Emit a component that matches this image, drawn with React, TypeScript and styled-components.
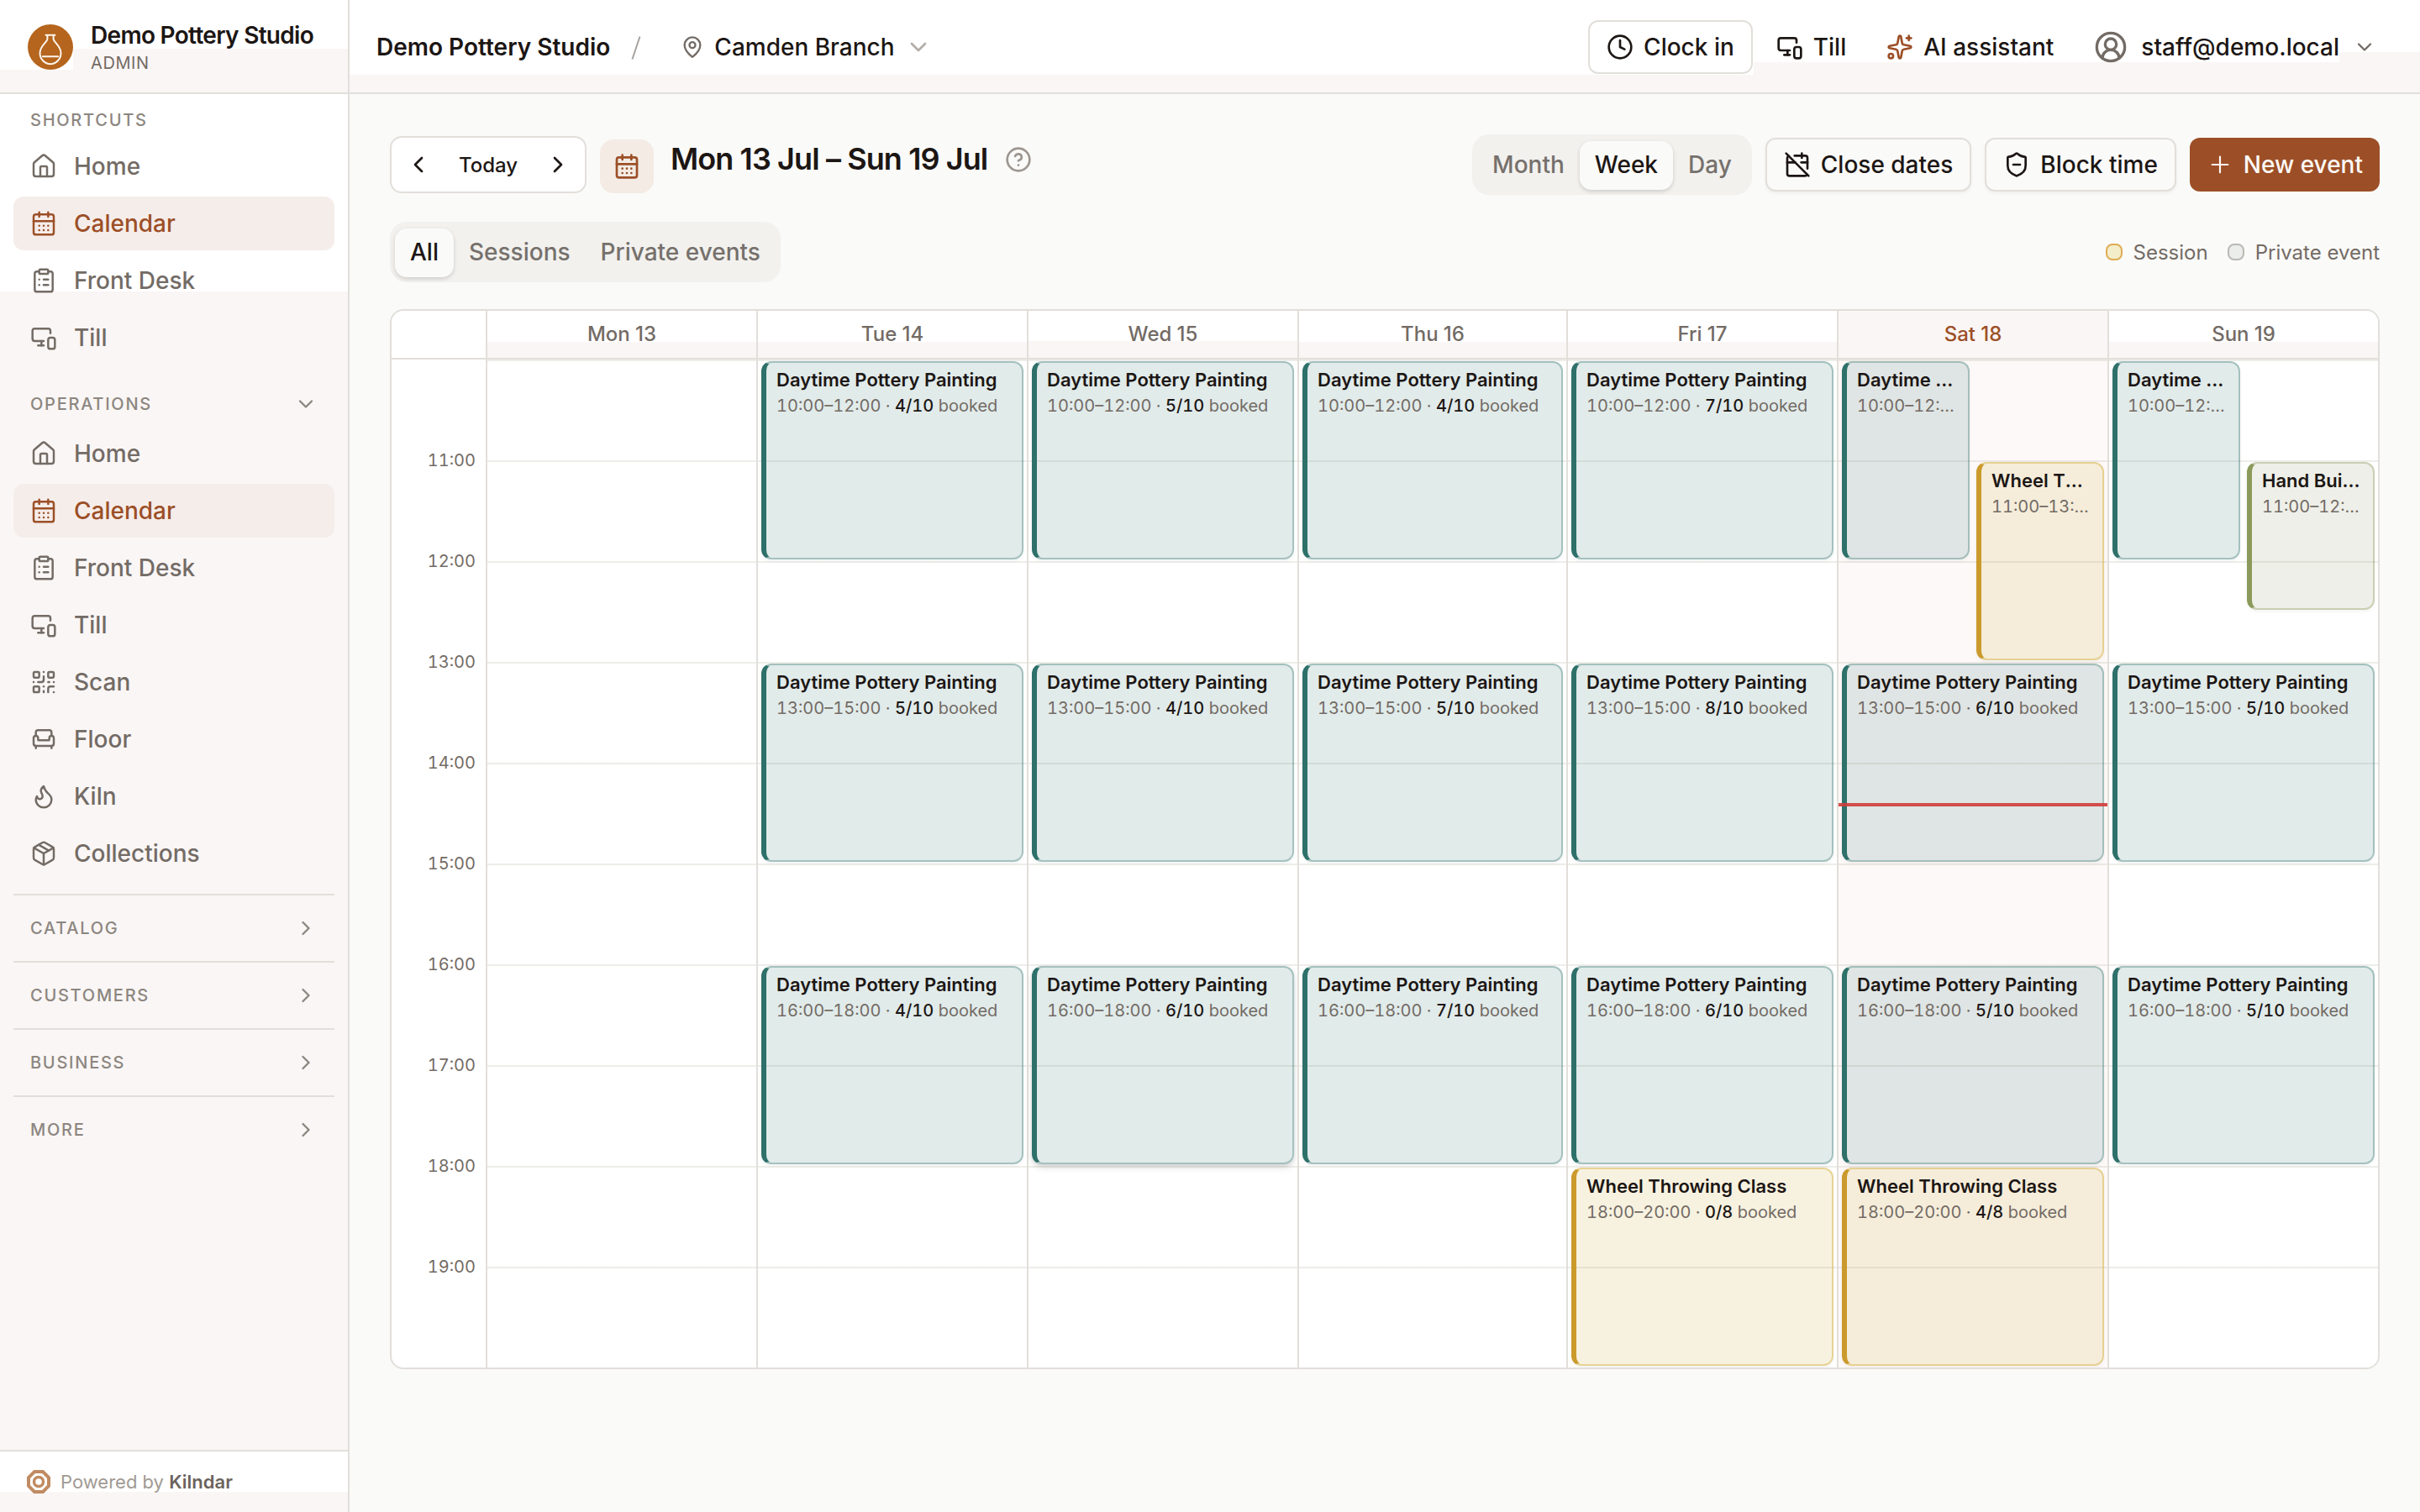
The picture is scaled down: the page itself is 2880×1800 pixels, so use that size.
import React from 'react';
import styled, { createGlobalStyle, css } from 'styled-components';
import {
  Armchair, CalendarDays, CalendarOff, ChevronDown, ChevronLeft, ChevronRight, CircleQuestionMark,
  CircleUserRound, ClipboardList, Clock, Flame, House, MapPin, MonitorSmartphone, Package, Plus,
  QrCode, ShieldMinus, Sparkles,
} from 'lucide-react';

const color = {
  ink: '#1c1614',
  muted: '#736b65',
  faint: '#8c8680',
  line: '#e2dfda',
  hourLine: 'rgba(90, 90, 60, 0.11)',
  accent: '#9c4f27',
  tint: '#faf6f5',
  canvas: '#fafaf8',
};

const GlobalStyle = createGlobalStyle`
  * { box-sizing: border-box; }
  body {
    margin: 0;
    background: ${color.canvas};
    color: ${color.ink};
    font-family: Inter, "Liberation Sans", sans-serif;
    font-size: 28px;
  }
  button { font: inherit; color: inherit; margin: 0; cursor: pointer; }
  svg { display: block; flex: none; }
`;

const Shell = styled.div`
  display: grid;
  grid-template-columns: 416px 1fr;
  width: 2880px;
  height: 1800px;
  overflow: hidden;
`;

/* Sidebar */

const Sidebar = styled.aside`
  display: flex;
  flex-direction: column;
  height: 1800px;
  border-right: 2px solid ${color.line};
`;

const Brand = styled.div`
  display: flex;
  align-items: center;
  gap: 20px;
  height: 112px;
  padding: 2px 32px 0;
  border-bottom: 2px solid ${color.line};
  background:
    linear-gradient(#fff 83px, ${color.tint} 83px) left / 87px 100% no-repeat,
    linear-gradient(#fff 58px, ${color.tint} 58px) right / 327px 100% no-repeat;
`;

const BrandText = styled.div`
  display: flex;
  flex-direction: column;
  padding-top: 2px;
`;

const BrandName = styled.div`
  font-weight: 600;
  line-height: 36px;
  letter-spacing: -0.025em;
  white-space: nowrap;
`;

const BrandRole = styled.div`
  font-size: 20px;
  line-height: 30px;
  letter-spacing: 0.03em;
  color: ${color.muted};
`;

const Nav = styled.nav`
  flex: 1;
  padding: 16px 16px 0;
  background: linear-gradient(#fff 235px, ${color.tint} 235px);
`;

const NavGroup = styled.section`
  display: flex;
  flex-direction: column;
  gap: 4px;
  & + & { margin-top: 32px; }
`;

const GroupHeading = styled.div<{ $roomy?: boolean }>`
  display: flex;
  align-items: center;
  justify-content: space-between;
  height: 30px;
  margin-bottom: ${(p) => (p.$roomy ? 8 : 4)}px;
  padding: 0 20px;
  font-size: 20px;
  font-weight: 500;
  letter-spacing: 0.087em;
  color: ${color.faint};
`;

const NavItem = styled.a<{ $active?: boolean }>`
  display: flex;
  align-items: center;
  gap: 20px;
  height: 64px;
  padding: 0 20px;
  border-radius: 12px;
  font-weight: 500;
  color: ${(p) => (p.$active ? color.accent : color.muted)};
  background: ${(p) => (p.$active ? '#f5edea' : 'transparent')};
`;

const ClosedGroups = styled.div`
  margin-top: 16px;
`;

const ClosedGroup = styled(GroupHeading)`
  height: 80px;
  margin: 0;
  border-top: 2px solid ${color.line};
`;

const PoweredBy = styled.footer`
  display: flex;
  align-items: center;
  gap: 12px;
  height: 74px;
  padding: 0 32px;
  border-top: 2px solid ${color.line};
  background: linear-gradient(#fff 48px, ${color.tint} 48px);
  font-size: 22px;
  color: #a19a93;
  b { font-weight: 600; color: #6b635d; }
`;

/* Top bar */

const Page = styled.div`
  display: flex;
  flex-direction: column;
  min-width: 0;
`;

const TopBar = styled.header`
  display: flex;
  align-items: center;
  justify-content: space-between;
  height: 112px;
  padding: 2px 32px 0;
  border-bottom: 2px solid ${color.line};
  font-weight: 500;
  background:
    linear-gradient(#fff 62px, ${color.tint} 62px) right / 96px 100% no-repeat,
    linear-gradient(#fff 74px, ${color.tint} 74px) right / 793px 100% no-repeat,
    linear-gradient(#fff 89px, ${color.tint} 89px);
`;

const Crumbs = styled.div`
  display: flex;
  align-items: center;
`;

const Org = styled.span`
  font-weight: 600;
`;

const Slash = styled.svg`
  margin: 2px 47px 0 25px;
`;

const Branch = styled.span`
  display: flex;
  align-items: center;
  gap: 12px;
`;

const BarActions = styled.div`
  display: flex;
  align-items: center;
  gap: 8px;
`;

const BarButton = styled.button<{ $outlined?: boolean; $wide?: boolean }>`
  display: flex;
  align-items: center;
  gap: ${(p) => (p.$wide ? 16 : 12)}px;
  height: 64px;
  padding: 0 20px;
  border: 0;
  border-radius: 12px;
  background: transparent;
  font-weight: 500;
  ${(p) => p.$outlined && css`
    border: 2px solid ${color.line};
    background: #fff;
  `}
`;

/* Toolbar */

const Main = styled.main`
  display: flex;
  flex-direction: column;
  gap: 32px;
  padding: 48px;
`;

const Row = styled.div`
  display: flex;
  align-items: center;
  justify-content: space-between;
  height: 72px;
`;

const Cluster = styled.div`
  display: flex;
  align-items: center;
  gap: 16px;
`;

const DateStepper = styled.div`
  display: grid;
  grid-template-columns: 64px 102px 64px;
  height: 68px;
  border: 2px solid ${color.line};
  border-radius: 14px;
  background: #fff;
`;

const StepButton = styled.button`
  display: flex;
  align-items: center;
  justify-content: center;
  padding: 0;
  border: 0;
  background: transparent;
  font-size: 24px;
  font-weight: 500;
`;

const RangeHeading = styled.div`
  display: flex;
  align-items: center;
`;

const RangeIcon = styled.div`
  display: grid;
  place-items: center;
  width: 64px;
  height: 64px;
  margin: 4px 20px 0 0;
  border-radius: 16px;
  background: #f3ebe4;
  color: ${color.accent};
`;

const RangeTitle = styled.h1`
  margin: 0 21px 14px 0;
  font-size: 36px;
  line-height: 40px;
  font-weight: 600;
  letter-spacing: -0.025em;
  white-space: nowrap;
`;

const HelpIcon = styled(CircleQuestionMark)`
  margin-bottom: 12px;
  color: #9d9690;
`;

const Segments = styled.div`
  display: flex;
  align-items: flex-end;
  height: 72px;
  padding: 6px;
  border-radius: 20px;
  background: #f2f1ee;
`;

const Segment = styled.button<{ $active?: boolean }>`
  height: 58px;
  padding: 0 18px 2px;
  border: 0;
  border-radius: 14px;
  font-weight: 500;
  background: transparent;
  color: #76706c;
  ${(p) => p.$active && css`
    background: ${color.canvas};
    color: ${color.ink};
    box-shadow: 0 2px 4px rgba(0, 0, 0, 0.1), 0 2px 6px rgba(0, 0, 0, 0.06);
  `}
`;

const ActionButton = styled.button<{ $primary?: boolean }>`
  display: flex;
  align-items: center;
  gap: 12px;
  height: 64px;
  padding: 0 20px;
  border-radius: 12px;
  font-weight: 500;
  border: ${(p) => (p.$primary ? '0' : `2px solid ${color.line}`)};
  color: ${(p) => (p.$primary ? '#fdf9f6' : color.ink)};
  background: ${(p) => (p.$primary ? color.accent : color.canvas)};
  box-shadow: ${(p) => (p.$primary ? 'none' : '0 2px 4px rgba(0, 0, 0, 0.05)')};
`;

const Legend = styled.div`
  display: flex;
  gap: 23px;
  font-size: 24px;
  color: ${color.muted};
`;

const LegendItem = styled.span`
  display: flex;
  align-items: center;
  gap: 13px;
`;

const Swatch = styled.i<{ $fill: string; $edge: string }>`
  width: 20px;
  height: 20px;
  border-radius: 8px;
  border: 2px solid ${(p) => p.$edge};
  background: ${(p) => p.$fill};
`;

/* Calendar */

const weekColumns = '112px 322px 322px 322px 320px 322px 322px 322px';

const Calendar = styled.section`
  width: 2368px;
  height: 1262px;
  border: 2px solid ${color.line};
  border-radius: 16px;
  background: #fff;
  overflow: hidden;
`;

const DayNames = styled.div`
  display: grid;
  grid-template-columns: ${weekColumns};
  height: 58px;
  border-bottom: 2px solid ${color.line};
`;

const DayName = styled.div<{ $today?: boolean; $split: number }>`
  display: flex;
  align-items: center;
  justify-content: center;
  gap: 0.26em;
  padding-bottom: 2px;
  border-left: 2px solid ${color.line};
  font-size: 24px;
  font-weight: 450;
  color: ${(p) => (p.$today ? color.accent : color.muted)};
  background: linear-gradient(#fff ${(p) => p.$split}px, ${color.tint} ${(p) => p.$split}px);
  b { font-weight: 500; }
`;

const WeekBody = styled.div`
  display: grid;
  grid-template-columns: ${weekColumns};
  height: 1200px;
`;

const Hours = styled.div`
  display: flex;
  flex-direction: column;
  padding: 105px 12px 0 0;
  font-size: 20px;
  line-height: 30px;
  color: ${color.muted};
  text-align: right;
`;

const HourLabel = styled.div`
  height: 120px;
  font-variant-numeric: tabular-nums;
`;

const DayColumn = styled.div<{ $today?: boolean }>`
  position: relative;
  border-left: 2px solid ${color.line};
  background:
    repeating-linear-gradient(${color.hourLine} 0 2px, transparent 2px 120px),
    ${(p) => (p.$today ? '#fdf9f8' : '#fff')};
`;

type Tone = 'teal' | 'gold' | 'olive';

const tones: Record<Tone, { bar: string; edge: string; fill: string }> = {
  teal: { bar: '#2e706a', edge: 'rgba(46, 112, 106, 0.43)', fill: 'rgba(46, 112, 106, 0.14)' },
  gold: { bar: '#cb9a2c', edge: 'rgba(208, 168, 44, 0.5)', fill: 'rgba(198, 166, 50, 0.15)' },
  olive: { bar: '#8b9a5b', edge: 'rgba(139, 148, 91, 0.46)', fill: 'rgba(128, 132, 80, 0.135)' },
};

const EventCard = styled.article<{ $tone: Tone; $lane?: 'left' | 'right'; $raised?: boolean }>`
  position: absolute;
  left: ${(p) => (p.$lane === 'right' ? 'calc(50% + 4px)' : '4px')};
  right: ${(p) => (p.$lane === 'left' ? 'calc(50% + 4px)' : '4px')};
  padding: 6px 12px;
  overflow: hidden;
  border: 2px solid ${(p) => tones[p.$tone].edge};
  border-left: 6px solid ${(p) => tones[p.$tone].bar};
  border-radius: 12px;
  background: ${(p) => tones[p.$tone].fill};
  background-clip: padding-box;
  box-shadow: ${(p) => (p.$raised
    ? '0 4px 8px rgba(0, 0, 0, 0.12), 0 2px 4px rgba(0, 0, 0, 0.08)'
    : '0 2px 4px rgba(0, 0, 0, 0.05)')};
`;

const EventTitle = styled.div`
  font-size: 22px;
  line-height: 28px;
  font-weight: 600;
  white-space: nowrap;
  overflow: hidden;
  text-overflow: ellipsis;
`;

const EventMeta = styled.div`
  margin-top: 3px;
  font-size: 20px;
  line-height: 28px;
  color: ${color.muted};
  white-space: nowrap;
  overflow: hidden;
  text-overflow: ellipsis;
  font-variant-numeric: tabular-nums;
  b { font-weight: 500; color: ${color.ink}; }
`;

const NowLine = styled.div`
  position: absolute;
  left: 0;
  right: 0;
  height: 4px;
  background: rgba(208, 60, 58, 0.9);
`;

interface Booking {
  title: string;
  start: number;
  end: number;
  booked: string;
  tone: Tone;
  lane?: 'left' | 'right';
  raised?: boolean;
}

const painting = (start: number, booked: number, extra: Partial<Booking> = {}): Booking => ({
  title: 'Daytime Pottery Painting', start, end: start + 2, booked: `${booked}/10`, tone: 'teal', ...extra,
});

const wheel = (start: number, booked: number, lane?: 'right'): Booking => ({
  title: 'Wheel Throwing Class', start, end: start + 2, booked: `${booked}/8`, tone: 'gold', lane,
});

interface Day { name: string; date: number; split: number; today?: boolean; events: Booking[] }

const week: Day[] = [
  { name: 'Mon', date: 13, split: 37, events: [] },
  { name: 'Tue', date: 14, split: 37, events: [painting(10, 4), painting(13, 5), painting(16, 4)] },
  { name: 'Wed', date: 15, split: 36, events: [painting(10, 5), painting(13, 4), painting(16, 6, { raised: true })] },
  { name: 'Thu', date: 16, split: 37, events: [painting(10, 4), painting(13, 5), painting(16, 7)] },
  { name: 'Fri', date: 17, split: 37, events: [painting(10, 7), painting(13, 8), painting(16, 6), wheel(18, 0)] },
  {
    name: 'Sat', date: 18, split: 0, today: true,
    events: [painting(10, 5, { lane: 'left' }), wheel(11, 6, 'right'), painting(13, 6), painting(16, 5), wheel(18, 4)],
  },
  {
    name: 'Sun', date: 19, split: 37,
    events: [
      painting(10, 5, { lane: 'left' }),
      { title: 'Hand Building Class', start: 11, end: 12.5, booked: '3/8', tone: 'olive', lane: 'right' },
      painting(13, 5), painting(16, 5),
    ],
  },
];

const HOUR = 120;
const clock = (h: number) => `${Math.floor(h)}:${h % 1 ? '30' : '00'}`;

const shortcuts = [
  { label: 'Home', icon: House },
  { label: 'Calendar', icon: CalendarDays, active: true },
  { label: 'Front Desk', icon: ClipboardList },
  { label: 'Till', icon: MonitorSmartphone },
];

const operations = [
  ...shortcuts,
  { label: 'Scan', icon: QrCode },
  { label: 'Floor', icon: Armchair },
  { label: 'Kiln', icon: Flame },
  { label: 'Collections', icon: Package },
];

const NavLinks = ({ items }: { items: { label: string; icon: React.ElementType; active?: boolean }[] }) => (
  <>
    {items.map(({ label, icon: Icon, active }) => (
      <NavItem key={label} $active={active}>
        <Icon size={32} strokeWidth={1.85} />
        {label}
      </NavItem>
    ))}
  </>
);

const VaseLogo = () => (
  <svg width="56" height="56" viewBox="0 0 56 56" fill="none">
    <circle cx="28" cy="28" r="27" fill="#b5651d" />
    <g stroke="#fdf6ee" strokeWidth="2" strokeLinecap="round" strokeLinejoin="round">
      <path d="M22.5 13.8h11" />
      <path d="M24.4 14v4.2c0 4-8.9 8.2-8.9 17 0 7.500 6.200 13 12.500 13s12.500-5.500 12.500-13c0-8.800-8.900-13-8.900-17V14" />
      <path d="M18.800 39.300h18.400" />
    </g>
  </svg>
);

const KilnMark = () => (
  <svg width="28" height="28" viewBox="0 0 28 28" fill="none" stroke="#c08b62">
    <path d="M9 2h10l7 7v10l-7 7H9l-7-7V9z" strokeWidth="4" />
    <circle cx="14" cy="14" r="5.500" strokeWidth="3.500" />
  </svg>
);

export default function App() {
  return (
    <Shell>
      <GlobalStyle />
      <Sidebar>
        <Brand>
          <VaseLogo />
          <BrandText>
            <BrandName>Demo Pottery Studio</BrandName>
            <BrandRole>ADMIN</BrandRole>
          </BrandText>
        </Brand>
        <Nav>
          <NavGroup>
            <GroupHeading>SHORTCUTS</GroupHeading>
            <NavLinks items={shortcuts} />
          </NavGroup>
          <NavGroup>
            <GroupHeading $roomy>OPERATIONS<ChevronDown size={28} /></GroupHeading>
            <NavLinks items={operations} />
          </NavGroup>
          <ClosedGroups>
            {['CATALOG', 'CUSTOMERS', 'BUSINESS', 'MORE'].map((name) => (
              <ClosedGroup key={name}>{name}<ChevronRight size={28} /></ClosedGroup>
            ))}
          </ClosedGroups>
        </Nav>
        <PoweredBy>
          <KilnMark />
          <span>Powered by <b>Kilndar</b></span>
        </PoweredBy>
      </Sidebar>

      <Page>
        <TopBar>
          <Crumbs>
            <Org>Demo Pottery Studio</Org>
            <Slash width="12" height="30" viewBox="0 0 12 30"><path d="M10.500 1.500 1.500 28.500" stroke="#a8a29e" strokeWidth="2" /></Slash>
            <Branch>
              <MapPin size={28} color={color.muted} />
              Camden Branch
              <ChevronDown size={32} color="#b3ada7" />
            </Branch>
          </Crumbs>
          <BarActions>
            <BarButton $outlined><Clock size={32} />Clock in</BarButton>
            <BarButton><MonitorSmartphone size={32} />Till</BarButton>
            <BarButton><Sparkles size={32} color={color.accent} />AI assistant</BarButton>
            <BarButton $wide>
              <CircleUserRound size={40} color={color.muted} />
              staff@demo.local
              <ChevronDown size={28} color={color.muted} />
            </BarButton>
          </BarActions>
        </TopBar>

        <Main>
          <Row>
            <Cluster>
              <DateStepper>
                <StepButton><ChevronLeft size={32} /></StepButton>
                <StepButton>Today</StepButton>
                <StepButton><ChevronRight size={32} /></StepButton>
              </DateStepper>
              <RangeHeading>
                <RangeIcon><CalendarDays size={32} /></RangeIcon>
                <RangeTitle>Mon 13 Jul – Sun 19 Jul</RangeTitle>
                <HelpIcon size={32} />
              </RangeHeading>
            </Cluster>
            <Cluster>
              <Segments>
                <Segment>Month</Segment>
                <Segment $active>Week</Segment>
                <Segment>Day</Segment>
              </Segments>
              <ActionButton><CalendarOff size={32} />Close dates</ActionButton>
              <ActionButton><ShieldMinus size={32} />Block time</ActionButton>
              <ActionButton $primary><Plus size={32} strokeWidth={1.6} />New event</ActionButton>
            </Cluster>
          </Row>

          <Row>
            <Segments>
              <Segment $active>All</Segment>
              <Segment>Sessions</Segment>
              <Segment>Private events</Segment>
            </Segments>
            <Legend>
              <LegendItem><Swatch $fill="#f3edca" $edge="#dfab55" />Session</LegendItem>
              <LegendItem><Swatch $fill="#ebedea" $edge="#b9b9b4" />Private event</LegendItem>
            </Legend>
          </Row>

          <Calendar>
            <DayNames>
              <div />
              {week.map((d) => (
                <DayName key={d.name} $today={d.today} $split={d.split}>
                  <span>{d.name}</span><b>{d.date}</b>
                </DayName>
              ))}
            </DayNames>
            <WeekBody>
              <Hours>
                {[11, 12, 13, 14, 15, 16, 17, 18, 19].map((h) => <HourLabel key={h}>{h}:00</HourLabel>)}
              </Hours>
              {week.map((d) => (
                <DayColumn key={d.name} $today={d.today}>
                  {d.events.map((e) => (
                    <EventCard
                      key={e.title + e.start}
                      $tone={e.tone}
                      $lane={e.lane}
                      $raised={e.raised}
                      style={{ top: (e.start - 10) * HOUR + 2, height: (e.end - e.start) * HOUR - 4 }}
                    >
                      <EventTitle>{e.title}</EventTitle>
                      <EventMeta>{clock(e.start)}–{clock(e.end)} · <b>{e.booked}</b> booked</EventMeta>
                    </EventCard>
                  ))}
                  {d.today && <NowLine style={{ top: 4.4 * HOUR }} />}
                </DayColumn>
              ))}
            </WeekBody>
          </Calendar>
        </Main>
      </Page>
    </Shell>
  );
}
